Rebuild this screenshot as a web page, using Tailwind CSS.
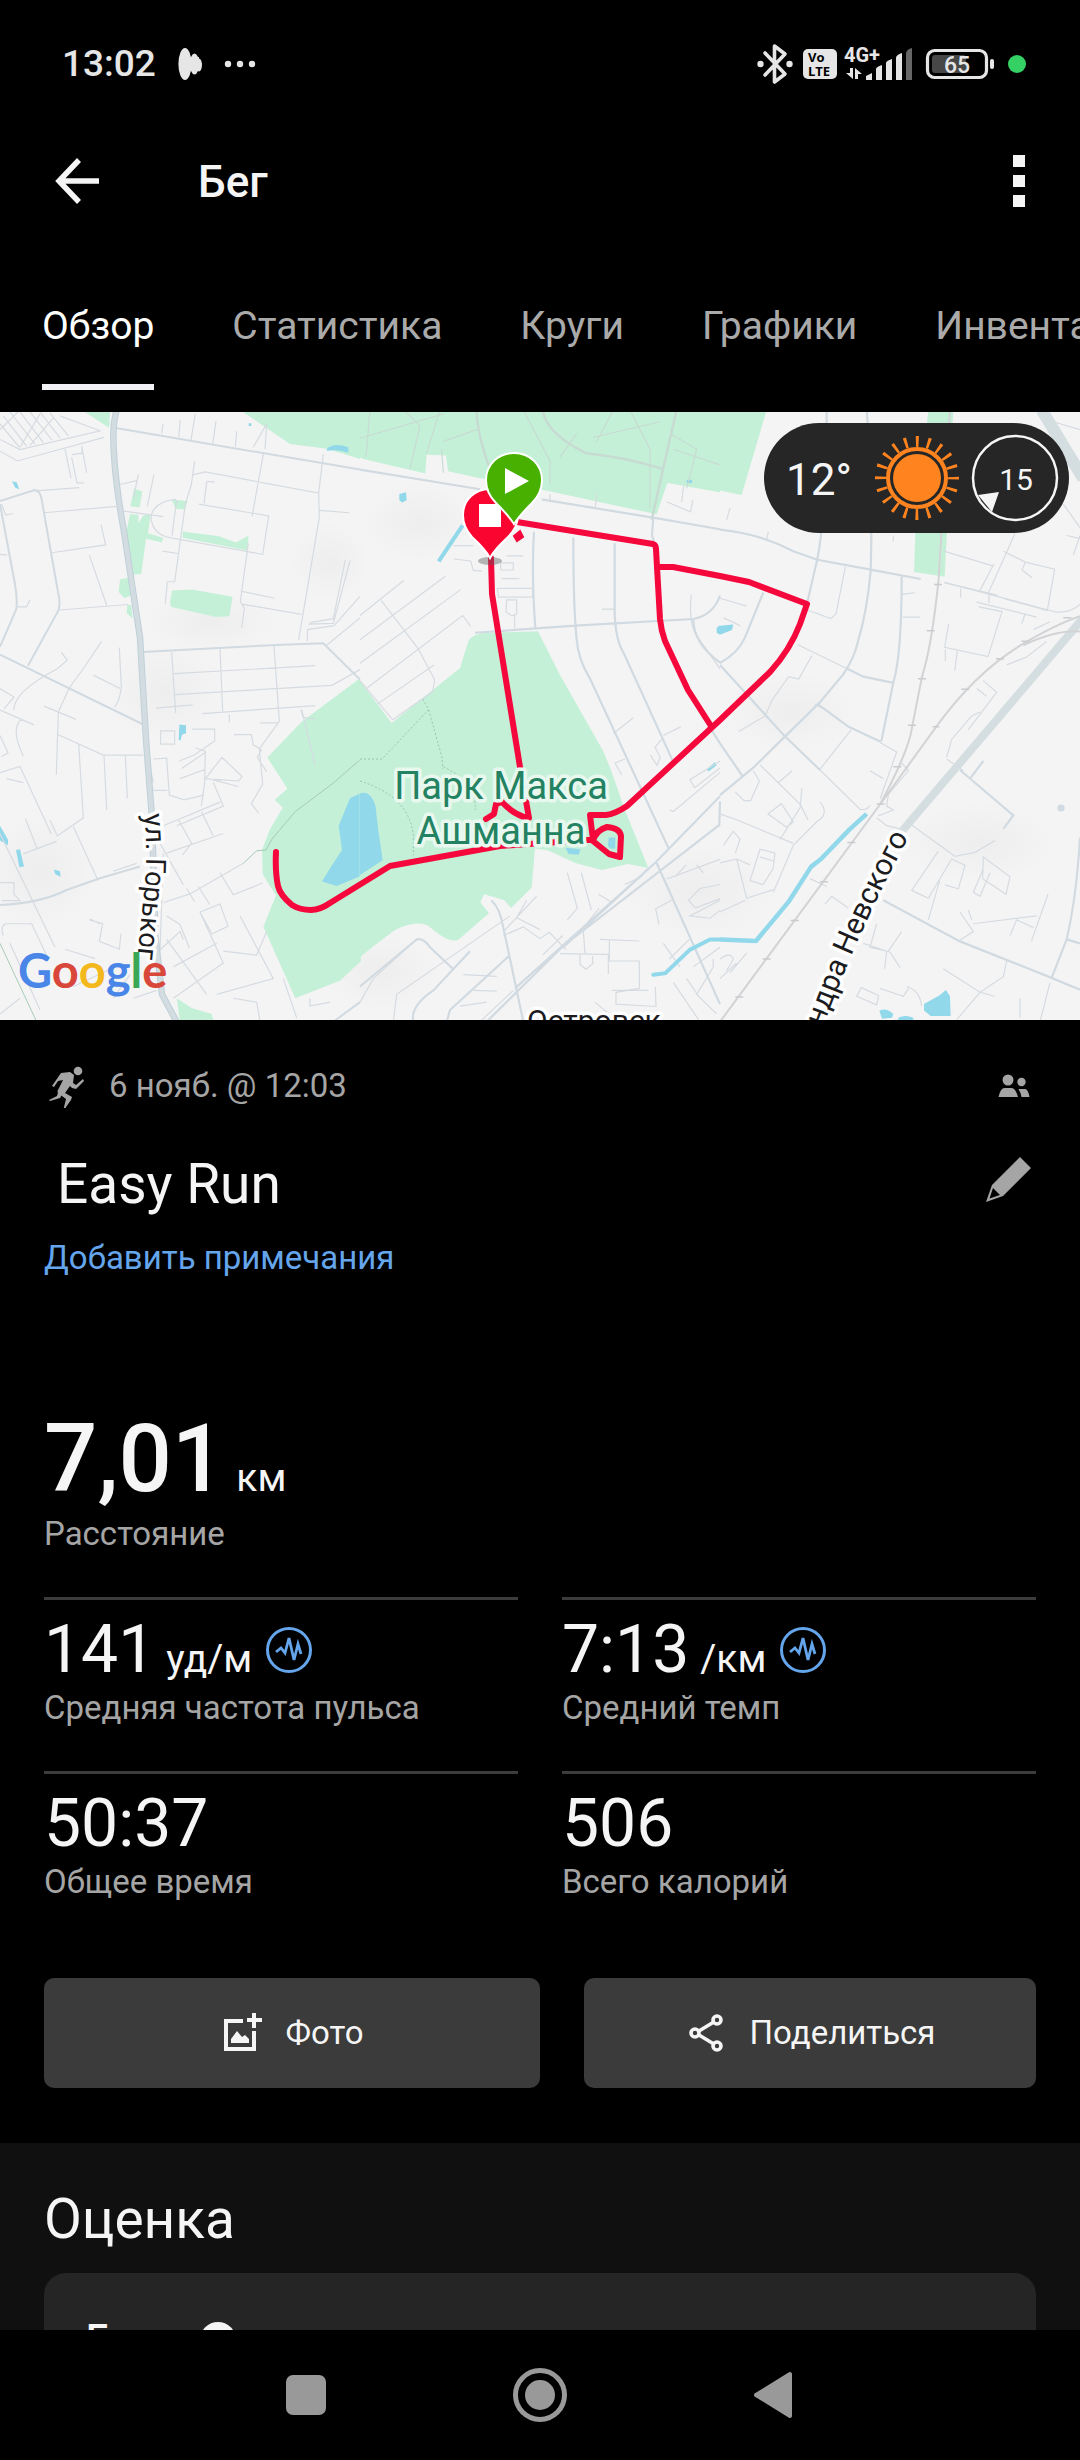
<!DOCTYPE html>
<html lang="ru">
<head>
<meta charset="utf-8">
<meta name="viewport" content="width=device-width, initial-scale=1">
<title>Бег</title>
<script src="https://cdn.jsdelivr.net/npm/@tailwindcss/browser@4"></script>
</head>
<body class="bg-black">
<div class="flex h-screen flex-col bg-black font-['Roboto',sans-serif] text-[#f5f5f5]">

  <!-- Status bar -->
  <div class="flex h-[128px] shrink-0 items-center justify-between pr-[54px] pl-[62px] text-[#e6e6e6]">
    <div class="flex items-center">
      <span class="text-[37px] leading-[48px] font-medium">13:02</span>
      <svg class="ml-[21px] h-[34px] w-[26px]" viewBox="0 0 26 34" fill="currentColor"><ellipse cx="8" cy="17" rx="6.600" ry="16"/><ellipse cx="17.500" cy="17" rx="4.500" ry="10.500"/><ellipse cx="22" cy="18" rx="3" ry="6.500"/><path d="M8 10h14v14H8z"/></svg>
      <svg class="ml-[20px] h-[8px] w-[34px]" viewBox="0 0 34 8" fill="currentColor"><circle cx="5" cy="4" r="3.200"/><circle cx="17" cy="4" r="3.200"/><circle cx="29" cy="4" r="3.200"/></svg>
    </div>
    <div class="flex items-center">
      <svg class="h-[42px] w-[36px]" viewBox="0 0 36 42" fill="none" stroke="currentColor" stroke-width="3.600" stroke-linejoin="round" stroke-linecap="round"><path d="M8 10l20 21-10.500 8V3L28 11 8 32"/><circle cx="3.500" cy="21" r="3.200" fill="currentColor" stroke="none"/><circle cx="32.500" cy="21" r="3.200" fill="currentColor" stroke="none"/></svg>
      <svg class="ml-[10px] h-[30px] w-[34px]" viewBox="0 0 34 30"><rect width="34" height="30" rx="5" fill="#e6e6e6"/><text font-family="Open Sans, sans-serif" font-weight="700" font-size="13" fill="#000"><tspan x="5" y="13">Vo</tspan><tspan x="5" y="27">LTE</tspan></text></svg>
      <svg class="ml-[7px] h-[36px] w-[70px]" viewBox="0 0 70 36" fill="currentColor"><text x="0" y="16" font-family="Roboto, sans-serif" font-weight="700" font-size="20">4G+</text><path d="M6 22h3v11L2 27h4zM11 33V22l7 6h-4v5z"/><path d="M22 34v-4l6-3v7zM32 34V23q0-2 6-4v15zM42 34V17q0-2 6-4v21zM52 34V12q0-3 6-5v27z"/><path d="M62 34V7q1-4 6-5v32z" fill="#666"/></svg>
      <svg class="ml-[10px] h-[32px] w-[72px]" viewBox="0 0 72 32"><rect x="3.500" y="2.500" width="59" height="27" rx="7" fill="none" stroke="#e6e6e6" stroke-width="3.200"/><rect x="8" y="7" width="34" height="18" rx="3" fill="#474747"/><rect x="66" y="11" width="4" height="10" rx="2" fill="#e6e6e6"/><text x="33" y="25" text-anchor="middle" font-family="Roboto, sans-serif" font-weight="500" font-size="23" fill="#e6e6e6">65</text></svg>
      <span class="ml-[12px] size-[18px] rounded-full bg-[#35d164]"></span>
    </div>
  </div>

  <!-- App bar -->
  <header class="flex h-[106px] shrink-0 items-center pr-[44px] pl-[44px]">
    <button type="button" aria-label="Назад" class="size-[66px]">
      <svg class="size-[66px]" viewBox="0 0 66 66" fill="none" stroke="#f5f5f5" stroke-width="5.500"><path d="M55 33H15M35 12L15 33l20 21"/></svg>
    </button>
    <h1 class="ml-[88px] pt-[2px] text-[44px] leading-[56px] font-medium">Бег</h1>
    <button type="button" aria-label="Меню" class="ml-auto flex h-[66px] w-[34px] flex-col items-center justify-center gap-[8px]">
      <span class="size-[12px] bg-[#f5f5f5]"></span><span class="size-[12px] bg-[#f5f5f5]"></span><span class="size-[12px] bg-[#f5f5f5]"></span>
    </button>
  </header>

  <!-- Tabs -->
  <nav class="flex h-[178px] shrink-0 items-start gap-[78px] overflow-hidden pl-[42px] text-[39px] leading-[48px] whitespace-nowrap text-[#aaa]">
    <a href="#" class="mt-[68px] border-b-[6px] border-[#f0f0f5] pb-[34px] text-white">Обзор</a>
    <a href="#" class="mt-[68px]">Статистика</a>
    <a href="#" class="mt-[68px]">Круги</a>
    <a href="#" class="mt-[68px]">Графики</a>
    <a href="#" class="mt-[68px]">Инвентарь</a>
  </nav>

  <main class="min-h-0 flex-1 overflow-y-auto [scrollbar-width:none]">
    <!-- Route map -->
    <section class="relative h-[608px] overflow-hidden bg-[#f5f4f5]">
      <svg class="h-full w-full" viewBox="0 0 1080 608" preserveAspectRatio="xMidYMid slice" fill="none" role="img" aria-label="Карта">
        <defs>
          <path id="gorky" d="M144 402Q148 440 145 470T136 560V620"/>
          <path id="nevsky" d="M795 700Q838 555 909 425"/>
          <radialGradient id="shade"><stop offset="0" stop-color="#ebebec" stop-opacity=".7"/><stop offset="1" stop-color="#ebebec" stop-opacity="0"/></radialGradient>
        </defs>
        <g fill="url(#shade)"><ellipse cx="210" cy="210" rx="70" ry="30"/><ellipse cx="330" cy="150" rx="40" ry="40"/><ellipse cx="165" cy="280" rx="60" ry="50"/><ellipse cx="40" cy="460" rx="60" ry="60"/><ellipse cx="420" cy="110" rx="60" ry="40"/><ellipse cx="790" cy="300" rx="70" ry="40"/><ellipse cx="980" cy="430" rx="80" ry="40"/><ellipse cx="700" cy="480" rx="80" ry="50"/><ellipse cx="380" cy="560" rx="60" ry="40"/></g>

        <!-- Western part of the town -->
        <g transform="translate(0 -2) scale(.33333 .39216)">
          <g fill="#c5f0d8">
            <path d="M245 0l82 45 4-45zM720 0l130 75 20 12 110 12 100 26V0zM402 200l25 8-8 40-28-2zM390 265l25 2v22l15-20 22-3-8 48 45 12-3 12-48-10-14 90-28 2-18-105zM515 228l48 4-8 22-28-2zM548 310l110 12 50 16 38-18-4 38-194-32zM360 432l24-4 10 44-20 8-18-16zM382 496l12 2 4 34-18-14zM516 460l60-2 122 18-10 50-40 2-130-25q-8-1-8-12zM1080 684L905 795 802 886l60 80-38 28 24 20-40 58-22 50 2 62 40 54-38 80 96 182 135-45 62-50zM530 1500l45 25 60 15 6 20H540z"/>
          </g>
          <g fill="#90d8ea">
            <path d="M980 100q20-18 65-5v14q-30-10-65-5zM36 182l14 2 8 18-12-4zM538 802l20 2v20l-12 4-4 14h-6zM0 1060l24 36v14L0 1098zM48 1122l12-2 12 44-14 2zM162 1172l18 4 2 14-16-6zM1080 978l-30 12-34 70 10 62-34 44-26 36 44 12 70-25zM746 34l8 0v7h-8z"/>
          </g>
          <g stroke="#d5dbe0" stroke-width="1.200">
            <path vector-effect="non-scaling-stroke" d="M0 75l60 26 240-48-120-38M0 105l52 25 260-60M0 35l58 60M10 15l70 78M30 5l75 82M60 5l70 78M90 5l66 72M120 5l60 66M150 8l55 58M60 95L120 10M90 90l70-70M0 50L60 0M195 100l18 74M215 120l16 66h20M215 114l32-4-2-18 15 68M108 206l130-8M132 262l216-16M155 364l162-20-14-52M268 370l52 128M180 510l204-14M5 240l12 28 22-4M50 502h30l10-18M0 368l22 2M0 440"/>
            <path vector-effect="non-scaling-stroke" d="M485 60l4-24M536 70l5-45M573 76L586 10M638 88l10-60M706 94l4-40M795 100l5-65-40 60M584 130l-10 60-18 50-32 198h-22l-6 56M576 166l40-8 340 54 14-100M790 112l-34 160M620 184l-8 54M620 182l24 2M372 258l118 14M528 228q-60 4-75 40 0 50 60 58l275 42 18-98-210-30M516 320l14-90M745 340l-24 148 12 18-8 50M722 462l102 18M725 495l180 26M956 214l2 60-62 312M958 256l90 6M1036 382l-36 150-70 10M1050 384l-50 160-75 2M360 190l50-10M415 165l-15 60M462 165l-20 80M488 360l45 6M922 590v-30l80-10 78-75M980 600l100-70"/>
            <path vector-effect="non-scaling-stroke" d="M515 618l12 155M522 672l424-20M524 726l472-24 84-40M660 608l8 160M822 602l16 192-60 70 10 90-34 50 22 24M468 760l110-8M606 774l340-20M688 776v20M780 798h55M902 764l8 20 36 4M702 828h52l6 26 24 12-12 20 28 36M482 818l42 0v34h-42zM576 814h68v30l-60 35-46 16M586 862l30 8-2 80-10 60M540 940l76-24M545 914l70-40M616 940l50-54 60 48-10 12zM625 940l90 20M640 950l30 60-140 50M305 590l-52 66-46 54-32 60-6 160M358 606l6 102q-4 30-20 50M280 676l80 34M170 826l140 54h120M236 850l14 190-78 46-22-40M312 880l8 140M376 880l6 110M42 766q-4-46 130-106l30-22-18-20M0 640"/>
            <path vector-effect="non-scaling-stroke" d="M132 755l96 34M0 765l102 38M65 788q-35 24 5 95M0 710l42 22-30 30M0 830l24 44-20 10M0 925l60-16 94 172M20 940l50 10M220 1062l74 138M76 1042l36 78M70 1132l100-32M0 1205h42v30l18 16H5M340 1176l70-20M10 1340q-10-20 5-30h80l50 90M30 1360l90 170M0 1080l165 290M300 1310l-30-12M268 1300l40 10-10 45 60 20 5-40M195 1375l90 24M220 1470l150-60M430 830l30 120M460 890l40-2 8 94 44 12 60-12M460 970h42M460 1075l40 60 50 76M535 1045l40 60-28 30M605 1025l34 60M490 1060l170-60M500 1130l170-50M490 1256l80-22 160-78M560 1220l24 34M595 1215l34 46M500 1290l40 22 28 60M660 1180l40 56 60-20 28-10M600 1280l60-20 24 56-48 20zM600 1280l70 130-150 90M720 1290l100 160-170 40M670 1380l100 10 30-60M700 1500l70 10 10 50M850 1450l40 100M930 1500l0 20 60-10M500 1350l120 140M450 1400l90-70 10 20M520 1420l130-60M340 1500l50-60M400 1500l70-20M0 1540l60-40M905 764l40 140M490 1130l-10 250"/>
          </g>
          <g stroke="#d0dae0" stroke-width="2">
            <path vector-effect="non-scaling-stroke" d="M348 46l732 106M0 232l104-28q15 2 20 20l50 240q8 26 2 46L84 652M0 240l44 200q10 50 4 70L0 604M0 624l430 178M430 617l400-18 140-4 110 92M0 1262q120-4 200-38l100-30 120-30M1000 1560l80-50"/>
          </g>
          <path vector-effect="non-scaling-stroke" stroke="#bfd0d8" stroke-width="6.500" d="M350 0q-10 30-10 60 0 100 32 250l48 270 18 260 18 200 10 300 20 150 50 80"/>
          <path vector-effect="non-scaling-stroke" stroke="#d3dde1" stroke-width="4.500" d="M350 0q-10 30-10 60 0 100 32 250l48 270 18 260 18 200 10 300 20 150 50 80"/>
          <path vector-effect="non-scaling-stroke" stroke="#a6cbb6" stroke-width="1" d="M0 1360l110 200M730 1156l40-32 28-2 18-28 70-70 110-70 84-62"/>
        </g>

        <!-- Centre with the park -->
        <g transform="translate(360 -2) scale(.33333 .39216)">
          <g fill="#c5f0d8">
            <path d="M0 0h1080v210l-158-24-32 80-340-62-200-32-86-16-6-40-58-2-4 48-190-38L0 120zM-1 690l96 108 205-140 24-66q10-24 70-24l140-4 66 112L730 870q30 60 60 140l75 158-60-10-80 15-80-18-80-32-40-5-10 100-62 52-20-20-60-15-12 20 26 28-92 68q-30 10-90-36-40-15-102 12l-62 40L-1 1396z"/>
          </g>
          <g fill="#90d8ea"><path d="M0 978q30-10 46 30l10 70 12 70L0 1186zM118 214l20-4 2 20-14 6-8-6zM616 1116l46 4-6 14-30-2zM746 1090l20 0v28q-18 4-22-8zM1040 916l24-18 6 8-24 16zM980 178h16v8h-16zM1070 555l10-6v24l-10-5z"/></g>
          <g stroke="#c7dbd2" stroke-width="1.200">
            <path vector-effect="non-scaling-stroke" d="M30 0L18 120M130 0l50 40-30 110M0 72l250-62M240 0l-40 110M250 160l-5-60M490 0l80 130 0 60M600 120l50-60M700 70l200-40M710 80l50-80M810 0l60 100 0 150M930 60l80 40-30 100M940 100l140 40M250 80l100-30"/>
            <path vector-effect="non-scaling-stroke" stroke-width="2.500" d="M548 0q10 60 130 110 120 10 230 40M350 0q0 60 40 150M950 0l-30 110-45 170"/>
          </g>
          <g stroke="#9dc3ad" stroke-width="1" stroke-dasharray="2 2"><path vector-effect="non-scaling-stroke" d="M0 890h66l140-126-20-30M206 765l40 120 2 30M0 946q150 40 160 140v50M250 910q100 40 96 110"/></g>
          <g stroke="#d5dbe0" stroke-width="1.200">
            <path vector-effect="non-scaling-stroke" d="M0 524L132 434M0 586l256-162M0 646l302-188M22 708l286-184 24 28M52 750l170-100M64 486l110 122 50 80-6 30-120 72L0 690M280 346h60M282 380l50 5 8 24 26 2M422 390h38v18h-38zM440 372h50M424 430h54M412 455h106v22H416zM440 484h30v36l-14 5-18-10zM464 520v36M726 508h36M570 215v20M705 250l6-36M965 235l6-42M920 234l72 26 6-30"/>
            <path vector-effect="non-scaling-stroke" d="M994 470q-10 80 20 110l66 80M820 785l-60 40M962 808l-52 22M795 890l-30 10 20 30M905 840l-20 20 16 26-10 20-20-26M1080 895l-90 48 14 20 76-50M930 1020l10 4 140-100M622 1180l30 90-30 30M664 1180l30 95M680 1310l38-40M715 1235l40 20M860 1170l-16 20-50 20M500 1250l-30 45 70 30M430 1330l100-90M430 1340l60-22 50 30 28-16 50 44M548 1390l60-50M670 1330l5 55M720 1350l118 4M748 1350v55h90v70l-70 10v30l120 6-2-50M600 1386l145 2v50M660 1390v24l18 12 20-14v-20M0 1510l40-60 130-100M100 1560l10-70 340-200M360 1560l100-80M310 1440l100 4M300 1520l80-10M340 1480l70 2"/>
            <path vector-effect="non-scaling-stroke" d="M920 1196l160-50M945 1190l34-30M1010 1160l20 20M935 1250l-48 22 10 40M1080 1210l-60 10-34 30 20 20 74-24M1080 1250l-90 40 60 6 30-20M928 1400l60-50M910 1360l50 60M1000 1420l80-50M1060 1400v20l-50 70 60 50M980 1450l40 50M940 1460l80 100M755 1480l110 0M705 1510l70 50"/>
          </g>
          <g stroke="#d0dae0" stroke-width="2.200">
            <path vector-effect="non-scaling-stroke" d="M0 152l360 50M545 228l330 46 205 30M880 270l-4 50 12 30M522 310q-8 110 4 246M640 325q0 180 10 260 4 50 40 100L926 1118M764 340l0 180q4 70 26 98l148 276M345 568l300-18 355-17q60-10 80-60M1000 534q0 60 80 110M1050 810l30 40M0 1470l170-120q20-5 40 20l70 56M160 1560q-10-40 60-80l110-100M260 1560l10-30 180-140M380 1560l228-192 470-310 2-60M490 1560l-60-240q-10-50-36-70M610 1370l255-200M890 1155l190 360M465 1475l420-320 195-170"/>
          </g>
          <path vector-effect="non-scaling-stroke" stroke="#90d8ea" stroke-width="4" d="M308 294l-72 92"/>
          <path vector-effect="non-scaling-stroke" stroke="#90d8ea" stroke-width="4" stroke-linecap="round" d="M880 1440l36-4 74-60 60-26h30"/>
        </g>

        <!-- Eastern part with the railway -->
        <g transform="translate(720 -2) scale(.33333 .39216)">
          <path fill="#c5f0d8" d="M0 0h140L65 217 0 205zM625 0h75l-26 425-92-12 4-100z"/>
          <g fill="#90d8ea"><path d="M0 550l40-3-4 14-36 12zM612 1515l46-22 20-14 12 16 2 50h-60l-20-14zM478 1532q20-10 42 8l-4 10-30 2zM535 1550q20-10 45 0v10h-45z"/></g>
          <ellipse cx="1023" cy="1015" rx="11" ry="9" fill="#d0dae0"/>
          <g stroke="#d5dbe0" stroke-width="1.200">
            <path vector-effect="non-scaling-stroke" d="M30 250l-10 30M140 330l5-20M376 400l-28 120-16 12-70-22M0 480l80 20M60 550q-20-10-50-20M232 598l150 62M276 626l-40 60-30-6-50 60-20 40-80 40M394 815L300 916M286 750l20 10M545 470l40-4M548 528h52M520 320v15M686 545l-12 60 130 24 42-115-70-12M676 610v30M712 615l-8 50M672 360l148 38M885 315l-78 148 0 30M850 360l66 28 88 18-22 105-130-30M916 388l-10 20 30 20M780 460l42-68M672 440l160 32M722 455v24M770 490l180 38M905 545l10-24M1040 320l40 8M1060 370l20-50M480 848l50 24-50 120M450 920l40 20M300 918l120 100q20 5 30-10M545 900l20 20-60 60-5 30 20 10-45 15"/>
            <path vector-effect="non-scaling-stroke" d="M100 920l18 26-26 50-20 0-26-22M120 905l120 100 24 40M216 920l-40 30M246 965l-6 50-60 80M144 1030l40-26 36 46-20 14zM300 1000q30 30-10 50l-70 60-60 120M0 1030l50 15 170 60M10 1110l30-36 20 20-14 36M0 1155l50-10 40 15M50 1145l30 100 80-22M90 1200l30-80 45 10-6 40-30 40zM120 1140l40 10M0 1280l76-30M270 1195l50 20M315 1260l20-20 50 30M470 1310l-20 60 60 12 30 40M545 1330l-40 50M430 1360l70 20-6 45M470 1040l30 20 50 10M575 1058l130 80 60-10 60-30M655 1125l-80 100 50 20 70-100 40 16-20 60-40-10M625 1300l34-100M790 1140l80 50-12 45-70-40zM790 1170l-30 60 20 10 30-60M720 1280l40 50-44 24M760 1310l190-20M755 1300l-10-25M984 1235l-50 120M870 1340l20-40 50 20M680 890l50 30M680 885l15-45 60-60 25-10M745 815l85-95-40-30M770 710l30 20M860 650l60-20 60-40M940 560l50-20M480 1475l70 20 16-20M410 1495l14-22 52 20-6 24zM560 1470q40 10 45 50M670 1425l110 60-70 70M860 1405l-10 40-70 40 45 10M900 1500v50M990 1460l-30 100M0 1450l50-40M0 1400q30-20 40 0l-20 30M80 1385l-50 50"/>
            <path vector-effect="non-scaling-stroke" d="M676 440l330 75q50 2 74-20M1030 240l50 60M1000 30l80 20"/>
          </g>
          <g stroke="#d0dae0" stroke-width="2.200">
            <path vector-effect="non-scaling-stroke" d="M0 305q120 10 220 55l72 22 160 25 150 24M320 0q0 260-28 380l-30 110M130 465L75 580q-20 40-75 65M440 0q20 200 12 410-10 100-38 180-10 40-44 84L300 745 100 912 0 982M545 425q0 200-25 270L484 845M382 660l48 20 90 16M296 752l90 56 96 38M0 650l190 178 110 90M0 850l68 84M720 918l160 116-30 34M750 940l40-45M490 1250l230 105 260 88 100 35M1080 1090q-10 150-40 260l-46 100M1040 1350l40 10"/>
          </g>
          <path vector-effect="non-scaling-stroke" stroke="#d4dee1" stroke-width="8" d="M1090 530L540 1080"/>
          <path vector-effect="non-scaling-stroke" stroke="#d4dee1" stroke-width="12" d="M965 0l125 175"/>
          <g stroke="#d2d3d5" stroke-width="2">
            <path vector-effect="non-scaling-stroke" d="M690 0q-20 220-34 430-20 170-50 250l-30 130q-10 60-96 196L0 1560M480 1006l170-200q120-140 260-210 100-50 170-70M910 600q100-40 170-35"/>
          </g>
          <path vector-effect="non-scaling-stroke" stroke="#cacbce" stroke-width="1.500" d="M642 445h24M620 563h24M594 685h24M564 804h24M520 910h24M470 1005h24M382 1103h24M300 1203h24M212 1302h24M128 1400h24M46 1497h24M638 808h20M724 712h24M828 634h24M904 590h24M1030 530h24"/>
          <path vector-effect="non-scaling-stroke" stroke="#90d8ea" stroke-width="4.500" stroke-linejoin="round" d="M0 1350l108 4L205 1255l68-90 30-20 85-75 52-40"/>
        </g>

        <!-- Track -->
        <g stroke="#f5083c" stroke-width="6" stroke-linejoin="round" stroke-linecap="round">
          <path d="M517 110L653 132Q656 133 656 137L657 155 660 207Q661 218 665 229L688 278 711 314"/>
          <path d="M657 155L673 155 720 164 749 170 807 192 800 212Q790 238 770 260L720 308 627 394Q615 402 606 403H590L593 428H586L500 434 390 454 330 491Q320 498 311 498 300 498 292 493 280 483 278 474 275 460 276 440"/>
          <path d="M593 429Q596 418 607 415 620 416 621 424L620 445 609 442ZM491 146L492 182 520 355 529 406Q515 404 502 390L496 392 494 402 486 407"/>
        </g>

        <!-- Labels -->
        <g font-family="Roboto, sans-serif" paint-order="stroke" stroke-linejoin="round">
          <g font-size="38" text-anchor="middle" fill="#238262" stroke="#e8f8ef" stroke-width="7"><text x="501" y="387">Парк Макса</text><text x="501" y="432">Ашманна</text></g>
          <g font-size="28" fill="#1c1c1e" stroke="#fff" stroke-width="7">
            <text><textPath href="#gorky">ул. Горьког</textPath></text>
            <text font-size="30" text-anchor="end"><textPath href="#nevsky" startOffset="100%">Александра Невского</textPath></text>
            <text font-size="30" x="527" y="619">Островск</text>
          </g>
        </g>

        <!-- Finish and start pins -->
        <ellipse cx="490" cy="149" rx="12" ry="4" fill="#555" opacity=".4"/>
        <path d="M514 124l6-5 3 6-6 4z" fill="#f5083c" stroke="#f5083c" stroke-width="2"/>
        <path d="M490 146Q486 138 472 125 463 115 463 103C463 88 475 77 490 77S518 88 518 103Q518 115 508 125 494 138 490 146Z" fill="#f9052f" stroke="#fff" stroke-width="2"/>
        <path d="M479 92h22v23h-22z" fill="#fff"/>
        <path d="M514 112Q509 104 496 91 486 81 486 68C486 53 498 41 514 41S542 53 542 68Q542 81 532 91 519 104 514 112Z" fill="#48b000" stroke="#fff" stroke-width="2"/>
        <path d="M505 56l24 13-24 13z" fill="#fff"/>

        <text x="18" y="576" font-family="Lato, sans-serif" font-weight="700" font-size="47"><tspan fill="#4a86e8">G</tspan><tspan fill="#d9473b">o</tspan><tspan fill="#f3b81c">o</tspan><tspan fill="#4a86e8">g</tspan><tspan fill="#3aa757">l</tspan><tspan fill="#d9473b">e</tspan></text>
      </svg>

      <!-- Weather -->
      <div class="absolute top-[11px] right-[11px] flex h-[110px] w-[305px] items-center justify-between rounded-full bg-[#262626] pr-[10px] pl-[22px]">
        <span class="pt-[4px] text-[44px] leading-[52px]">12°</span>
        <svg class="ml-auto size-[88px]" viewBox="-44 -44 88 88" stroke="#ff841f"><circle r="24" fill="#ff841f" stroke="none"/><circle r="29" fill="none" stroke-width="4"/><circle r="36.500" fill="none" stroke-width="11" stroke-dasharray="2.800 8.668" stroke-dashoffset="1.400"/></svg>
        <svg class="ml-[10px] size-[88px]" viewBox="-44 -44 88 88"><circle r="42" fill="none" stroke="#f5f5f5" stroke-width="2.500"/><path d="M-37 17l21-3-7 20z" fill="#f5f5f5"/><text x="1" y="12" text-anchor="middle" font-family="Roboto, sans-serif" font-size="30" fill="#f5f5f5">15</text></svg>
      </div>
    </section>

    <!-- Activity summary -->
    <section class="px-[44px] pt-[46px] pb-[55px]">
      <div class="flex h-[40px] items-center text-[33px] leading-[40px] text-[#a5a5a5]">
        <svg class="size-[44px]" viewBox="0 0 44 44" fill="#a5a5a5"><circle cx="34" cy="7" r="4.300"/><path d="M17 9l9-1 4 3-1 8 3 2 7-6 1 2-8 8-4-1-2-2-5 7 7 4-1 3-5 7-2 5-1-1 3-12-8-6q-1-2 0-3l5-10-5 1-4 6-2-1z"/><path d="M15 25l4 4-3 5-10 3-1-1 8-4z"/></svg>
        <span class="ml-[21px]">6 нояб. @ 12:03</span>
        <svg class="mr-[4px] ml-auto h-[26px] w-[36px]" viewBox="0 0 36 26" fill="#a5a5a5"><circle cx="12" cy="7" r="5.500"/><circle cx="25.500" cy="9" r="4.200"/><path d="M2.500 24q2-9 6-9h7q4 0 6.500 9zM22.500 16H29q3 0 4.500 8h-8q-1-5-3-8z"/></svg>
      </div>
      <div class="mt-[46px] flex h-[64px] items-center">
        <h2 class="pl-[13px] text-[55px] leading-[64px]">Easy Run</h2>
        <button type="button" aria-label="Изменить" class="ml-auto size-[56px]">
          <svg class="size-[56px]" viewBox="0 0 56 56" fill="#a5a5a5"><path fill-rule="evenodd" d="M40 1l11 11-28 28L6 46l6-17zM13 32l-3.500 10.500L20 39z"/></svg>
        </button>
      </div>
      <a href="#" class="mt-[22px] block text-[33px] leading-[40px] text-[#64a5ec]">Добавить примечания</a>

      <dl class="mt-[129px] grid grid-cols-2 gap-x-[44px] gap-y-[43px]">
        <div class="col-span-2 flex flex-col">
          <dd class="flex items-baseline gap-[11px] text-[94px] leading-[104px] font-medium">7,01<span class="text-[39px] leading-[48px] font-normal">км</span></dd>
          <dt class="mt-[3px] text-[33px] leading-[40px] text-[#a5a5a5]">Расстояние</dt>
        </div>
        <div class="flex flex-col border-t-[3px] border-[#3c3c3c] pt-[14px]">
          <dd class="flex items-baseline gap-[11px] text-[66px] leading-[72px]">141<span class="text-[39px] leading-[48px]">уд/м</span>
            <svg class="size-[52px] self-center" viewBox="-26 -26 52 52" fill="none" stroke="#64a5ec"><circle r="21.500" stroke-width="3"/><path d="M-13 2l5-4 4 5L0-12 5 10l4-16 3 10" stroke-width="2.800"/></svg></dd>
          <dt class="mt-[2px] text-[33px] leading-[40px] text-[#a5a5a5]">Средняя частота пульса</dt>
        </div>
        <div class="flex flex-col border-t-[3px] border-[#3c3c3c] pt-[14px]">
          <dd class="flex items-baseline gap-[11px] text-[66px] leading-[72px]">7:13<span class="text-[39px] leading-[48px]">/км</span>
            <svg class="size-[52px] self-center" viewBox="-26 -26 52 52" fill="none" stroke="#64a5ec"><circle r="21.500" stroke-width="3"/><path d="M-13 2l5-4 4 5L0-12 5 10l4-16 3 10" stroke-width="2.800"/></svg></dd>
          <dt class="mt-[2px] text-[33px] leading-[40px] text-[#a5a5a5]">Средний темп</dt>
        </div>
        <div class="flex flex-col border-t-[3px] border-[#3c3c3c] pt-[14px]">
          <dd class="text-[66px] leading-[72px]">50:37</dd>
          <dt class="mt-[2px] text-[33px] leading-[40px] text-[#a5a5a5]">Общее время</dt>
        </div>
        <div class="flex flex-col border-t-[3px] border-[#3c3c3c] pt-[14px]">
          <dd class="text-[66px] leading-[72px]">506</dd>
          <dt class="mt-[2px] text-[33px] leading-[40px] text-[#a5a5a5]">Всего калорий</dt>
        </div>
      </dl>

      <div class="mt-[76px] grid grid-cols-[496fr_452fr] gap-[44px] text-[33px] leading-[40px]">
        <button type="button" class="flex h-[110px] items-center justify-center gap-[21px] rounded-[10px] bg-[#3b3b3b]">
          <svg class="size-[44px]" viewBox="0 0 44 44" fill="none" stroke="#f5f5f5" stroke-width="4"><path d="M22 10H5v28h28V20M33 2v15M26 9h15"/><path d="M10 32v-4l6-8 5 6 3-2 4 4v4z" fill="#f5f5f5" stroke="none"/></svg>
          Фото
        </button>
        <button type="button" class="flex h-[110px] items-center justify-center gap-[21px] rounded-[10px] bg-[#3b3b3b]">
          <svg class="size-[44px]" viewBox="0 0 44 44" fill="none" stroke="#f5f5f5" stroke-width="3.600"><circle cx="10" cy="22" r="4"/><circle cx="32" cy="9" r="4"/><circle cx="32" cy="35" r="4"/><path d="M14 20l14-8.500M14 24l14 8.500"/></svg>
          Поделиться
        </button>
      </div>
    </section>

    <!-- Rating -->
    <section class="bg-[#101010] px-[44px] pt-[44px] pb-[44px]">
      <h2 class="text-[55px] leading-[64px]">Оценка</h2>
      <div class="mt-[22px] flex items-center gap-[25px] rounded-[22px] bg-[#252525] px-[42px] pt-[43px] pb-[43px]">
        <span class="text-[40px] leading-[48px] font-medium">База</span>
        <svg class="size-[36px]" viewBox="0 0 36 36"><circle cx="18" cy="18" r="18" fill="#f5f5f5"/><text x="18" y="28" text-anchor="middle" font-family="Roboto, sans-serif" font-weight="700" font-size="28" fill="#252525">?</text></svg>
      </div>
    </section>
  </main>

  <!-- System navigation -->
  <nav class="flex h-[130px] shrink-0 items-center justify-center gap-[178px] bg-black">
    <button type="button" aria-label="Недавние" class="size-[56px]"><svg class="size-[56px]" viewBox="0 0 56 56"><rect x="8" y="8" width="40" height="40" rx="7" fill="#999"/></svg></button>
    <button type="button" aria-label="Домой" class="size-[56px]"><svg class="size-[56px]" viewBox="0 0 56 56"><circle cx="28" cy="28" r="24.500" fill="none" stroke="#999" stroke-width="5"/><circle cx="28" cy="28" r="15" fill="#999"/></svg></button>
    <button type="button" aria-label="Назад" class="size-[56px]"><svg class="size-[56px]" viewBox="0 0 56 56"><path d="M10 28L44 7v42z" fill="#999" stroke="#999" stroke-width="4" stroke-linejoin="round"/></svg></button>
  </nav>
</div>
</body>
</html>
